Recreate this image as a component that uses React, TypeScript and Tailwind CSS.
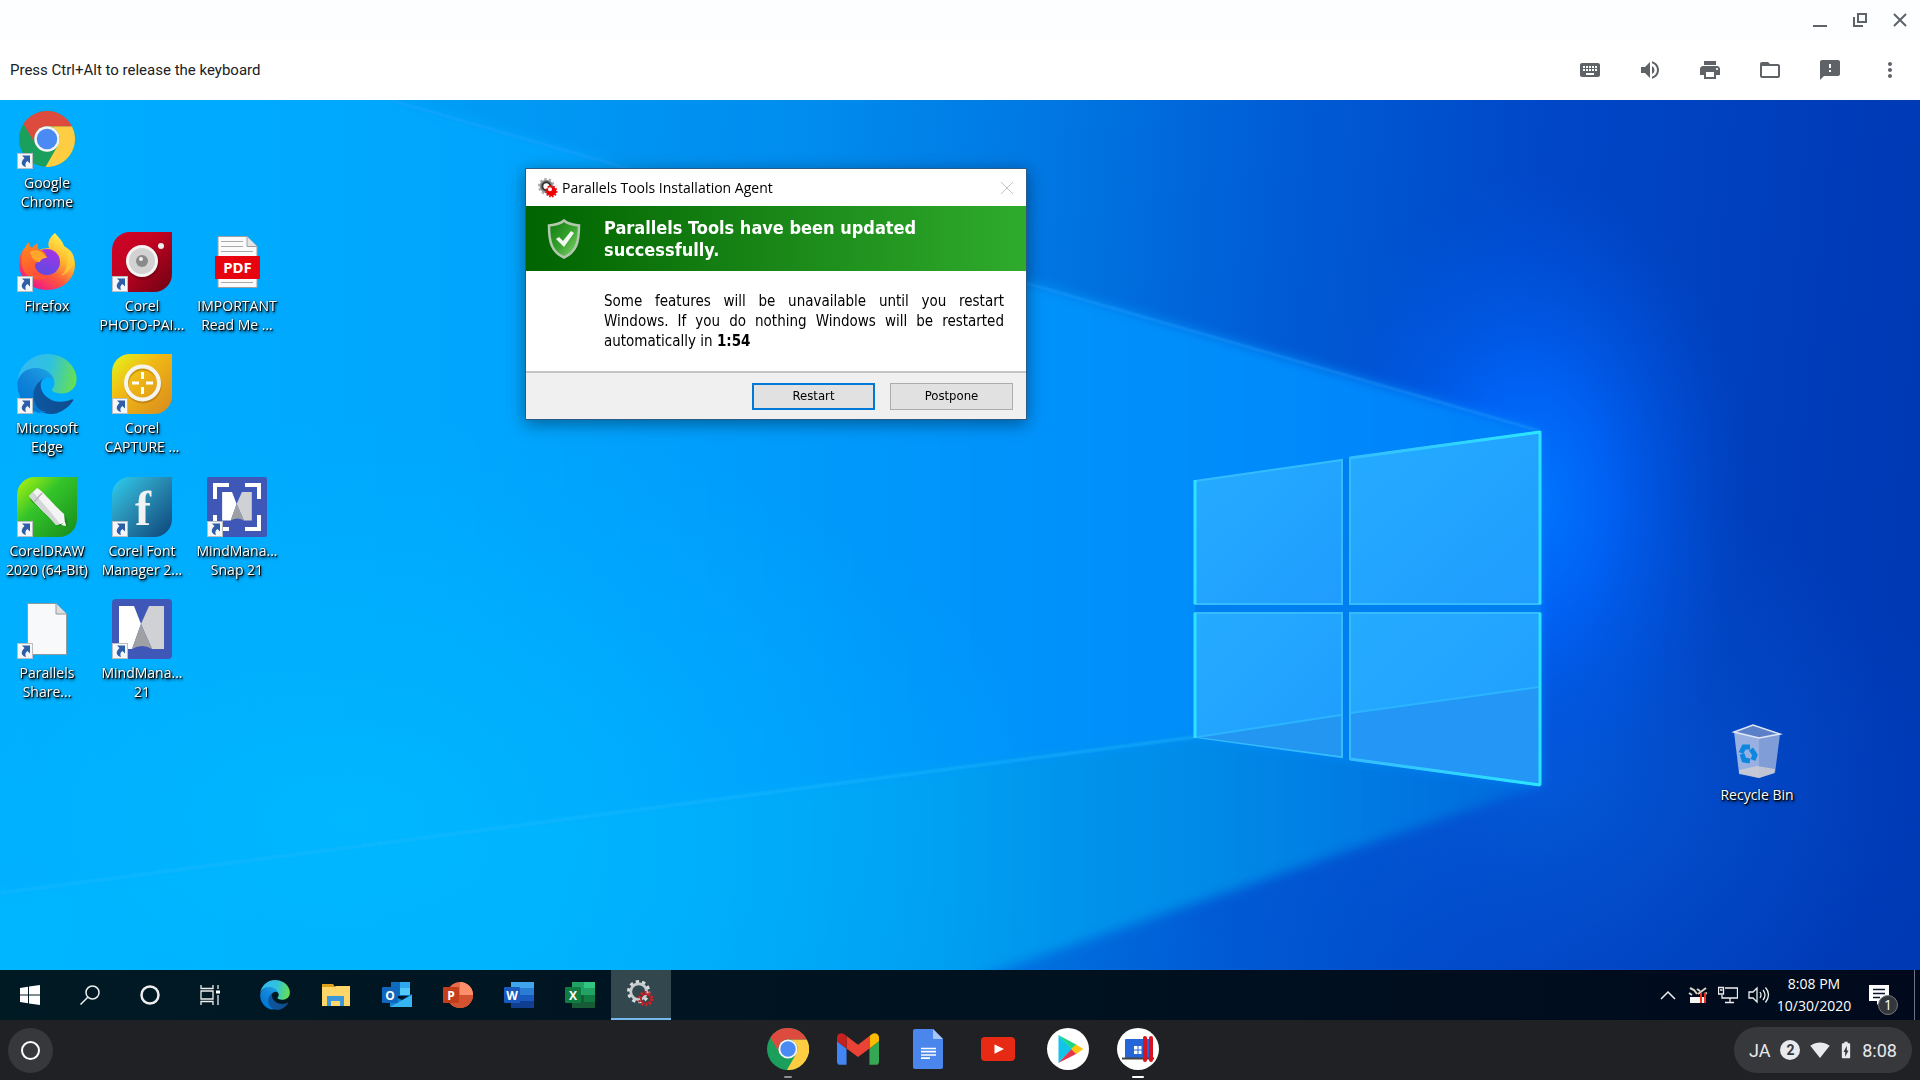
import React from "react";
import {
  MdKeyboard,
  MdVolumeUp,
  MdPrint,
  MdFolderOpen,
  MdFeedback,
  MdMoreVert,
  MdSignalWifi4Bar,
  MdBatteryChargingFull,
} from "react-icons/md";

/* ---------- logos ---------- */

type IconProps = { className?: string };

function ChromeLogo({ className }: IconProps) {
  return (
    <svg viewBox="0 0 48 48" className={className}>
      <circle cx="24" cy="24" r="24" fill="#1a9f5c" />
      <path d="M45.4 13.1A24 24 0 0 1 22.7 48L33.44 29.45A10.9 10.9 0 0 0 24 13.1Z" fill="#ffcd41" />
      <path d="M24 13.1H45.4A24 24 0 0 0 3.86 10.9L14.56 29.45A10.9 10.9 0 0 1 24 13.1Z" fill="#dc4b3e" />
      <circle cx="24" cy="24" r="10.9" fill="#f5f5f5" />
      <circle cx="24" cy="24" r="8.8" fill="#4a8af4" />
    </svg>
  );
}

function EdgeLogo({ className }: IconProps) {
  return (
    <svg viewBox="0 0 256 259" className={className}>
      <defs>
        <linearGradient id="edge-a" x1="60" y1="177" x2="241" y2="177" gradientUnits="userSpaceOnUse">
          <stop offset="0" stopColor="#0c59a4" />
          <stop offset="1" stopColor="#114a8b" />
        </linearGradient>
        <linearGradient id="edge-b" x1="150" y1="95" x2="42" y2="225" gradientUnits="userSpaceOnUse">
          <stop offset="0" stopColor="#1b9de2" />
          <stop offset="0.4" stopColor="#1486da" />
          <stop offset="1" stopColor="#0078d4" />
        </linearGradient>
        <linearGradient id="edge-c" x1="10" y1="60" x2="250" y2="120" gradientUnits="userSpaceOnUse">
          <stop offset="0" stopColor="#35b8f1" />
          <stop offset="0.5" stopColor="#2fc2df" />
          <stop offset="1" stopColor="#66e050" />
        </linearGradient>
      </defs>
      <path
        fill="url(#edge-a)"
        d="M235.68 195.46a93.73 93.73 0 0 1-10.54 4.71 101.87 101.87 0 0 1-35.9 6.46c-47.32 0-88.54-32.55-88.54-74.32A31.48 31.48 0 0 1 117.13 105c-42.8 1.8-53.8 46.4-53.8 72.53 0 73.88 68.09 81.37 82.76 81.37 7.91 0 19.84-2.3 27-4.56l1.31-.44a128.34 128.34 0 0 0 66.6-52.8 4 4 0 0 0-5.32-5.64z"
      />
      <path
        fill="url(#edge-b)"
        d="M105.73 246.39a79.2 79.2 0 0 1-22.74-21.34 80.72 80.72 0 0 1 34.14-120c3.12-1.47 8.45-4.13 15.54-4a32.35 32.35 0 0 1 25.69 13 31.88 31.88 0 0 1 6.36 18.66c0-.21 24.46-79.6-80-79.6-43.9 0-84.5 41.66-84.5 78.21a130.15 130.15 0 0 0 12.11 56 128 128 0 0 0 80.88 67.11 75.55 75.55 0 0 0 32.52-8z"
      />
      <path
        fill="url(#edge-c)"
        d="M152.33 148.86c-.81 1.05-3.3 2.5-3.3 5.66 0 2.61 1.7 5.12 4.72 7.23 14.38 10 41.49 8.68 41.56 8.68a59.56 59.56 0 0 0 30.27-8.35 61.38 61.38 0 0 0 30.43-52.88c.26-22.41-8-37.31-11.34-43.91C223.46 23.84 177.72 0 128 0A128 128 0 0 0 0 126.2c.48-36.54 36.8-66.05 80-66.05 3.5 0 23.46.34 42 10.07 16.34 8.58 24.9 18.94 30.85 29.21 6.18 10.67 7.28 24.15 7.28 29.52s-2.74 13.33-7.8 19.91z"
      />
    </svg>
  );
}

function FirefoxLogo() {
  return (
    <svg viewBox="0 0 60 60" className="size-15">
      <defs>
        <linearGradient id="ff-body" x1="50" y1="6" x2="16" y2="56" gradientUnits="userSpaceOnUse">
          <stop offset="0" stopColor="#fff44f" />
          <stop offset="0.35" stopColor="#ffb72e" />
          <stop offset="0.65" stopColor="#ff5a3c" />
          <stop offset="1" stopColor="#f0148a" />
        </linearGradient>
        <linearGradient id="ff-globe" x1="36" y1="16" x2="26" y2="44" gradientUnits="userSpaceOnUse">
          <stop offset="0" stopColor="#a832e8" />
          <stop offset="1" stopColor="#5a4be0" />
        </linearGradient>
        <linearGradient id="ff-head" x1="8" y1="12" x2="22" y2="40" gradientUnits="userSpaceOnUse">
          <stop offset="0" stopColor="#ff8a1e" />
          <stop offset="1" stopColor="#ff5236" />
        </linearGradient>
      </defs>
      <path
        fill="url(#ff-body)"
        d="M38 1c3 4 8 8 9 13 7 4 11 11 11 18 0 15-12 26-28 26S2 46 2 32c0-7 2-13 6-16l12 3c6-3 10-3 12-3-2-6 1-11 6-15z"
      />
      <circle cx="30" cy="30" r="13" fill="url(#ff-globe)" />
      <path
        fill="url(#ff-head)"
        d="M12 10c0 3 1 5 3 6 2-3 4-4 6-5-1 3 0 5 1 7 4 0 6 2 8 7-3 1-6 2-8 5-4 0-5 4-3 7 2 5 7 8 13 7-6 6-20 5-25-5C3 32 4 18 12 10z"
      />
      <path fill="#ffb42c" d="M13 20c6-4 13-1 17 6-4 0-6 1-7 4-4 0-8-2-10-10z" opacity="0.8" />
      <path fill="#ffd53a" d="M47 15c6 9 5 21-3 29 10-4 15-14 12-22-2-4-5-6-9-7z" opacity="0.6" />
    </svg>
  );
}

/* Corel tiles share one leaf-shaped outline */
function CorelTile({ id, from, mid, to, children }: { id: string; from: string; mid: string; to: string; children: React.ReactNode }) {
  return (
    <svg viewBox="0 0 60 60" className="size-15">
      <defs>
        <linearGradient id={id} x1="0" y1="0" x2="1" y2="1">
          <stop offset="0.05" stopColor={from} />
          <stop offset="0.4" stopColor={mid} />
          <stop offset="1" stopColor={to} />
        </linearGradient>
      </defs>
      <path d="M18 0H60V42a18 18 0 0 1-18 18H0V18A18 18 0 0 1 18 0Z" fill={`url(#${id})`} />
      {children}
    </svg>
  );
}

function PhotoPaintIcon() {
  return (
    <CorelTile id="corel-photo" from="#cd0425" mid="#c30322" to="#6d0212">
      <circle cx="31" cy="31" r="17" fill="#6d0010" opacity="0.5" />
      <circle cx="30" cy="29" r="16" fill="#f4f4f4" />
      <circle cx="30" cy="29" r="13" fill="#d2d2d2" />
      <circle cx="30" cy="29" r="6" fill="#8a8a8a" />
      <circle cx="29" cy="27" r="2" fill="#f0f0f0" />
      <circle cx="49" cy="14" r="3" fill="#eee" />
    </CorelTile>
  );
}

function CaptureIcon() {
  return (
    <CorelTile id="corel-capture" from="#e3f01d" mid="#f0b914" to="#d88a1e">
      <circle cx="31" cy="31" r="16.5" fill="none" stroke="#a8690e" strokeWidth="4" opacity="0.5" />
      <circle cx="30.5" cy="29" r="16.5" fill="none" stroke="#f5f5f0" strokeWidth="4" />
      <path d="M30.5 18v7M30.5 33v7M20 29h7M34 29h7" stroke="#fff" strokeWidth="3" />
    </CorelTile>
  );
}

function DrawIcon() {
  return (
    <CorelTile id="corel-draw" from="#a4ef12" mid="#35c52a" to="#178a1c">
      <path d="M13 23l8-8L50 41l1 8-10 0z" fill="#127a18" opacity="0.5" />
      <path d="M12 19l8-8c7 4 9 9 27 26l1 9-9 2C31 38 22 32 12 19z" fill="#f4f4f4" />
      <path d="M12 19l4-4c9 10 18 20 27 32l-4 1C31 38 22 32 12 19z" fill="#d4d6d8" />
      <path d="M17 25l8-9" stroke="#b6b6b6" strokeWidth="1.5" />
      <path d="M44 48l4-3 1 4z" fill="#fff" />
    </CorelTile>
  );
}

function FontManagerIcon() {
  return (
    <CorelTile id="corel-font" from="#2cc8ea" mid="#2b93b8" to="#0d4478">
      <text x="31" y="48" textAnchor="middle" fontSize="48" fontWeight="bold" fill="#f0f2f4" className="font-['Liberation_Serif',serif]">
        f
      </text>
    </CorelTile>
  );
}

function MindM() {
  return (
    <>
      <path d="M7 7H22L29 25 20 50H7Z" fill="#fff" />
      <path d="M37 7H52V50H40L29 25Z" fill="#d0d1d4" />
      <path d="M29 25L40 50Q30 44 20 50Z" fill="#9fa0a4" />
    </>
  );
}

function MindManagerIcon() {
  return (
    <svg viewBox="0 0 60 60" className="size-15">
      <rect width="60" height="60" rx="4" fill="#3f57b6" />
      <MindM />
    </svg>
  );
}

function MindSnapIcon() {
  return (
    <svg viewBox="0 0 60 60" className="size-15">
      <rect width="60" height="60" rx="2" fill="#3f57b6" />
      <path d="M8 22V8H22M38 8H52V22M52 38V52H38M22 52H8V38" fill="none" stroke="#fff" strokeWidth="4" />
      <g transform="translate(10.5 10.5) scale(.66)">
        <MindM />
      </g>
    </svg>
  );
}

function PdfIcon() {
  return (
    <svg viewBox="0 0 60 60" className="size-15">
      <path d="M11 4.5H40L50 14.5V55.5H11Z" fill="#fafafa" stroke="#9aa0a4" />
      <path d="M40 4.5V14.5H50" fill="#e4e4e4" stroke="#9aa0a4" />
      <path d="M14 9.5H36M14 14.5H36M14 19.5H46M14 50.5H46" stroke="#a9a9a9" />
      <rect x="8" y="24" width="45" height="23" fill="#e8040f" />
      <text x="30.5" y="41" textAnchor="middle" fontSize="15" fontWeight="bold" fill="#fff" className="font-['Noto_Sans',sans-serif]">
        PDF
      </text>
    </svg>
  );
}

function BlankFileIcon() {
  return (
    <svg viewBox="0 0 60 60" className="size-15">
      <path d="M10.5 4.5H39L49.5 15V55.5H10.5Z" fill="#f8f9fa" stroke="#8f9a9f" />
      <path d="M39 4.5V15H49.5" fill="#dcdfe0" stroke="#8f9a9f" />
    </svg>
  );
}

function RecycleBinIcon() {
  return (
    <svg viewBox="0 0 60 60" className="size-15">
      <path d="M7 11L32 17V57L12 52Z" fill="#b3c3e6" opacity="0.85" />
      <path d="M32 17L53 13 48 52 32 57Z" fill="#8ea6da" opacity="0.9" />
      <path d="M7 11L26 4 53 13 32 17Z" fill="#5c80c8" stroke="#dde6f5" strokeWidth="1.5" />
      <path d="M12 49L30 45 48 48 47 52 32 57 12 53Z" fill="#cfcfd2" opacity="0.8" />
      <g fill="none" stroke="#0b87e0" strokeWidth="5">
        <path d="M14 32l3-6 6 0" />
        <path d="M24 28l4 6-2 5" />
        <path d="M23 40l-6-1-2-6" />
      </g>
    </svg>
  );
}

function GearsIcon({ className, dark }: IconProps & { dark?: boolean }) {
  return (
    <svg viewBox="0 0 30 30" className={className}>
      <circle cx="12.5" cy="12.5" r="8.5" fill="none" stroke={dark ? "#8a8a8a" : "#c9cccf"} strokeWidth="3" />
      <circle cx="12.5" cy="12.5" r="11" fill="none" stroke={dark ? "#aaa" : "#d9dcde"} strokeWidth="3" strokeDasharray="3.6 3.31" />
      {dark && <circle cx="12.5" cy="12.5" r="6" fill="none" stroke="#333" strokeWidth="3" />}
      <circle cx="20" cy="20" r="5" fill={dark ? "#e00" : "none"} stroke={dark ? "#e00" : "#b51d20"} strokeWidth={dark ? 5 : 2} />
      <circle cx="20" cy="20" r={dark ? 8 : 7} fill="none" stroke={dark ? "#f01010" : "#d0242a"} strokeWidth="2.5" strokeDasharray="2.4 2" />
      {dark && <circle cx="18" cy="17" r="3" fill="#fff" />}
    </svg>
  );
}

function ShieldIcon() {
  return (
    <svg viewBox="0 0 34 40" className="h-10 w-[34px]">
      <defs>
        <linearGradient id="shield" x1="0" y1="0" x2="1" y2="1">
          <stop offset="0" stopColor="#0e7a10" />
          <stop offset="0.5" stopColor="#35a02c" />
          <stop offset="1" stopColor="#8fdc78" />
        </linearGradient>
      </defs>
      <path d="M17 1.5C21 5 27 6 32 6.5 32 24 29 33 17 38.5 5 33 2 24 2 6.5 7 6 13 5 17 1.5Z" fill="url(#shield)" stroke="#b4c8b0" strokeWidth="2.500" />
      <path d="M9 20l3-2 4 4 8-10 3 2-10 14z" fill="#f3f6f1" />
    </svg>
  );
}

/* ---------- wallpaper ---------- */

function Wallpaper() {
  return (
    <svg viewBox="0 0 1920 870" preserveAspectRatio="none" className="absolute inset-0 size-full" aria-hidden="true">
      <defs>
        <linearGradient id="wp-base" x1="0" y1="0" x2="1920" y2="180" gradientUnits="userSpaceOnUse">
          <stop offset="0" stopColor="#00a4f9" />
          <stop offset="0.22" stopColor="#009df6" />
          <stop offset="0.42" stopColor="#008cee" />
          <stop offset="0.55" stopColor="#0076e2" />
          <stop offset="0.66" stopColor="#005dd6" />
          <stop offset="0.8" stopColor="#0047c8" />
          <stop offset="1" stopColor="#0039b4" />
        </linearGradient>
        <linearGradient id="wp-beam" x1="0" y1="0" x2="1540" y2="0" gradientUnits="userSpaceOnUse">
          <stop offset="0" stopColor="#00aeff" />
          <stop offset="0.3" stopColor="#00a6fd" />
          <stop offset="0.6" stopColor="#0096fb" />
          <stop offset="0.8" stopColor="#008cfa" />
          <stop offset="1" stopColor="#0080fa" />
        </linearGradient>
        <linearGradient id="wp-low" x1="0" y1="0" x2="1540" y2="0" gradientUnits="userSpaceOnUse">
          <stop offset="0" stopColor="#00b7ff" />
          <stop offset="0.35" stopColor="#00b2fd" />
          <stop offset="0.6" stopColor="#009ff2" />
          <stop offset="0.8" stopColor="#0088e6" />
          <stop offset="1" stopColor="#0068dc" />
        </linearGradient>
        <radialGradient id="wp-cyan" cx="0" cy="0" r="1" gradientUnits="userSpaceOnUse" gradientTransform="translate(350 720) scale(700 420)">
          <stop offset="0" stopColor="#00b8ff" />
          <stop offset="1" stopColor="#00b0ff" stopOpacity="0" />
        </radialGradient>
        <radialGradient id="wp-glow" cx="0" cy="0" r="1" gradientUnits="userSpaceOnUse" gradientTransform="translate(1530 400) scale(220 330)">
          <stop offset="0" stopColor="#0078ff" />
          <stop offset="0.35" stopColor="#0068ff" stopOpacity="0.8" />
          <stop offset="1" stopColor="#0054e0" stopOpacity="0" />
        </radialGradient>
        <radialGradient id="wp-floor" cx="0" cy="0" r="1" gradientUnits="userSpaceOnUse" gradientTransform="translate(1540 680) scale(420 300)">
          <stop offset="0" stopColor="#0560dc" stopOpacity="0.7" />
          <stop offset="1" stopColor="#0550d0" stopOpacity="0" />
        </radialGradient>
        <linearGradient id="wp-pane" x1="0" y1="0" x2="1" y2="1">
          <stop offset="0" stopColor="#24acff" />
          <stop offset="1" stopColor="#209cff" />
        </linearGradient>
        <linearGradient id="wp-edge" x1="1350" y1="0" x2="1540" y2="0" gradientUnits="userSpaceOnUse">
          <stop offset="0" stopColor="#34bcff" />
          <stop offset="1" stopColor="#2ce6ff" />
        </linearGradient>
        <filter id="wp-soft" x="-5%" y="-5%" width="110%" height="110%">
          <feGaussianBlur stdDeviation="6" />
        </filter>
        <filter id="wp-line" x="-5%" y="-5%" width="110%" height="110%">
          <feGaussianBlur stdDeviation="1" />
        </filter>
      </defs>
      <rect width="1920" height="870" fill="url(#wp-base)" />
      <rect width="1920" height="870" fill="url(#wp-floor)" />
      <rect width="1920" height="870" fill="url(#wp-glow)" />
      <g filter="url(#wp-soft)">
        <path d="M-20 -20H330L1540 331V685L940 890H-20Z" fill="url(#wp-beam)" />
        <path d="M-20 796L1195 637 1540 685 940 890H-20Z" fill="url(#wp-low)" />
      </g>
      <rect width="1200" height="870" fill="url(#wp-cyan)" />
      <g filter="url(#wp-line)">
        <path d="M390 0L1540 331" stroke="#2ba4ff" strokeWidth="2" opacity="0.5" />
        <path d="M0 793L1195 637" stroke="#20baff" strokeWidth="3" opacity="0.5" />
      </g>
      <path d="M1195 381L1540 331V685L1195 637Z" fill="#007ff0" />
      <g fill="url(#wp-pane)" stroke="#34bcff" strokeWidth="2">
        <path d="M1195 381L1342 360V504H1195Z" />
        <path d="M1350 358L1540 332V504H1350Z" />
        <path d="M1195 513H1342V657L1195 637Z" />
        <path d="M1350 513H1540V685L1350 659Z" />
      </g>
      <path d="M1197 637L1341 615V656Z" fill="#2396f2" />
      <path d="M1351 613L1539 587V683L1351 658Z" fill="#2396f6" />
      <path d="M1197 637L1341 615M1351 613L1539 587" stroke="#2bb4ff" strokeWidth="2" />
      <path d="M1195 380V504M1195 513V638M1540 331V504M1540 513V685" stroke="#2ce2ff" strokeWidth="3" />
      <path d="M1350 358L1540 332M1350 659L1540 685" stroke="url(#wp-edge)" strokeWidth="3" />
    </svg>
  );
}

/* ---------- desktop ---------- */

interface Shortcut {
  label: string[];
  icon: React.ReactNode;
  cell: string;
  arrow?: boolean;
}

const SHORTCUTS: Shortcut[] = [
  { label: ["Google", "Chrome"], icon: <ChromeLogo className="size-14" />, cell: "col-start-1 row-start-1", arrow: true },
  { label: ["Firefox"], icon: <FirefoxLogo />, cell: "col-start-1 row-start-2", arrow: true },
  { label: ["Corel", "PHOTO-PAI..."], icon: <PhotoPaintIcon />, cell: "col-start-2 row-start-2", arrow: true },
  { label: ["IMPORTANT", "Read Me ..."], icon: <PdfIcon />, cell: "col-start-3 row-start-2" },
  { label: ["Microsoft", "Edge"], icon: <EdgeLogo className="size-15" />, cell: "col-start-1 row-start-3", arrow: true },
  { label: ["Corel", "CAPTURE ..."], icon: <CaptureIcon />, cell: "col-start-2 row-start-3", arrow: true },
  { label: ["CorelDRAW", "2020 (64-Bit)"], icon: <DrawIcon />, cell: "col-start-1 row-start-4", arrow: true },
  { label: ["Corel Font", "Manager 2..."], icon: <FontManagerIcon />, cell: "col-start-2 row-start-4", arrow: true },
  { label: ["MindMana...", "Snap 21"], icon: <MindSnapIcon />, cell: "col-start-3 row-start-4", arrow: true },
  { label: ["Parallels", "Share..."], icon: <BlankFileIcon />, cell: "col-start-1 row-start-5", arrow: true },
  { label: ["MindMana...", "21"], icon: <MindManagerIcon />, cell: "col-start-2 row-start-5", arrow: true },
];

function DesktopIcon({ label, icon, arrow, cell }: Shortcut) {
  return (
    <button type="button" className={`flex w-[94px] flex-col items-center self-start ${cell}`}>
      <span className="relative flex size-15 items-center justify-center">
        {icon}
        {arrow && (
          <svg viewBox="0 0 16 16" className="absolute bottom-0 left-0 size-4">
            <rect x="0.5" y="0.5" width="15" height="15" fill="#f4f6f8" stroke="#b9bec4" />
            <path d="M5 2.5h8v8l-2.5-2.5C8 9.5 8 11.5 9 14 4.5 13 3 9 7.5 5z" fill="#2d5fa8" />
          </svg>
        )}
      </span>
      <span className="mt-1 flex flex-col whitespace-nowrap text-[14px] leading-[19px] text-white [text-shadow:1px_1px_1px_#000,1px_2px_3px_#000,0_0_2px_#0008]">
        {label.map((line) => (
          <span key={line}>{line}</span>
        ))}
      </span>
    </button>
  );
}

function InstallDialog() {
  return (
    <section
      role="dialog"
      aria-labelledby="agent-title"
      className="absolute left-[525px] top-[68px] w-[502px] border border-[#2a5a86] bg-white shadow-[0_4px_16px_rgba(0,0,0,0.4)]"
    >
      <header className="flex h-[37px] items-center px-3">
        <GearsIcon className="size-5" dark />
        <h1 id="agent-title" className="ml-1 flex-1 text-[14px] leading-5 text-black">
          Parallels Tools Installation Agent
        </h1>
        <button type="button" aria-label="Close" disabled>
          <svg viewBox="0 0 14 14" className="size-[14px]" stroke="#c4c4c4">
            <path d="M1 1l12 12M13 1L1 13" />
          </svg>
        </button>
      </header>
      <div className="flex h-[65px] items-center bg-linear-to-r from-[#006400] to-[#2fab2c] pl-[21px] font-['DejaVu_Sans_Condensed','DejaVu_Sans',sans-serif]">
        <ShieldIcon />
        <p className="ml-[23px] w-[360px] text-[18px] font-bold leading-[22px] text-white">Parallels Tools have been updated successfully.</p>
      </div>
      <div className="h-[100px] pl-[78px] pr-[22px] pt-5 font-['DejaVu_Sans_Condensed','DejaVu_Sans',sans-serif] text-[15px] leading-5 text-black">
        <p className="text-justify [text-align-last:justify]">
          Some features will be unavailable until you restart Windows. If you do nothing Windows will be restarted
        </p>
        <p>
          automatically in <b>1:54</b>
        </p>
      </div>
      <footer className="flex h-[48px] items-center justify-end gap-[15px] border-t-2 border-[#c4c4c4] bg-[#f0f0f0] pr-[13px] font-['DejaVu_Sans_Condensed','DejaVu_Sans',sans-serif] text-[13px] text-black">
        <button type="button" className="h-[27px] w-[123px] border-2 border-[#0078d7] bg-[#e1e1e1]">
          Restart
        </button>
        <button type="button" className="h-[27px] w-[123px] border border-[#adadad] bg-[#e1e1e1]">
          Postpone
        </button>
      </footer>
    </section>
  );
}

/* ---------- windows taskbar ---------- */

function OfficeBadge({ letter, color }: { letter: string; color: string }) {
  return (
    <>
      <rect y="7" width="16" height="16" rx="1" fill={color} />
      <text x="8" y="19.5" textAnchor="middle" fontSize="12" fontWeight="bold" fill="#fff">
        {letter}
      </text>
    </>
  );
}

const APPS: { name: string; icon: React.ReactNode }[] = [
  { name: "Microsoft Edge", icon: <EdgeLogo className="size-[30px]" /> },
  {
    name: "File Explorer",
    icon: (
      <svg viewBox="0 0 30 30" className="size-[30px]">
        <path d="M1 4h11l2 3h14v4H1z" fill="#e0a11b" />
        <path d="M1 7h12l2-1h14v20H1z" fill="#ffd668" />
        <path d="M6 16h17v10h-4v-5h-9v5H6z" fill="#3b96dc" />
      </svg>
    ),
  },
  {
    name: "Outlook",
    icon: (
      <svg viewBox="0 0 30 30" className="size-[30px]">
        <path d="M9 2h19v14H9z" fill="#0f6cbd" />
        <path d="M18 2h10v6H18z" fill="#30a8ee" />
        <path d="M18 8h10v7H18z" fill="#50c8f8" />
        <path d="M8 14l12 6 10-6v13H8z" fill="#1684d8" />
        <path d="M8 27l22-12v12z" fill="#35b5f2" />
        <OfficeBadge letter="O" color="#0f68be" />
      </svg>
    ),
  },
  {
    name: "PowerPoint",
    icon: (
      <svg viewBox="0 0 30 30" className="size-[30px]">
        <circle cx="17" cy="15" r="13" fill="#ed6c47" />
        <path d="M17 2A13 13 0 0 1 30 15H17z" fill="#ff8f6b" />
        <path d="M4 15h26a13 13 0 0 1-26 0z" fill="#d35230" />
        <OfficeBadge letter="P" color="#c43e1c" />
      </svg>
    ),
  },
  {
    name: "Word",
    icon: (
      <svg viewBox="0 0 30 30" className="size-[30px]">
        <path d="M7 2h23v7H7z" fill="#41a5ee" />
        <path d="M7 8h23v7H7z" fill="#2b7cd3" />
        <path d="M7 15h23v7H7z" fill="#185abd" />
        <path d="M7 21h23v7H7z" fill="#103f91" />
        <OfficeBadge letter="W" color="#185abd" />
      </svg>
    ),
  },
  {
    name: "Excel",
    icon: (
      <svg viewBox="0 0 30 30" className="size-[30px]">
        <path d="M7 2h12v13H7z" fill="#21a366" />
        <path d="M19 2h11v7H19z" fill="#33c481" />
        <path d="M19 8h11v7H19z" fill="#21a366" />
        <path d="M7 15h23v13H7z" fill="#185c37" />
        <path d="M19 15h11v7H19z" fill="#107c41" />
        <OfficeBadge letter="X" color="#107c41" />
      </svg>
    ),
  },
];

function WindowsTaskbar() {
  return (
    <nav aria-label="Windows taskbar" className="flex h-[50px] items-stretch bg-linear-to-r from-[#001a24] to-[#000a1c] text-white">
      <button type="button" aria-label="Start" className="flex w-15 items-center justify-center">
        <svg viewBox="0 0 20 20" className="size-5" fill="#fff">
          <path d="M0 3l8-1.2V9.5H0zM9 1.6L20 0v9.5H9zM0 10.5h8v7.7L0 17zM9 10.5h11V20L9 18.4z" />
        </svg>
      </button>
      <button type="button" aria-label="Search" className="flex w-15 items-center justify-center">
        <svg viewBox="0 0 20 20" className="size-5" fill="none" stroke="#eee" strokeWidth="1.5">
          <circle cx="12.5" cy="7.5" r="6.5" />
          <path d="M8 12L0.5 19.5" />
        </svg>
      </button>
      <button type="button" aria-label="Cortana" className="flex w-15 items-center justify-center">
        <svg viewBox="0 0 20 20" className="size-5" fill="none" stroke="#eee" strokeWidth="2.5">
          <circle cx="10" cy="10" r="8.5" />
        </svg>
      </button>
      <button type="button" aria-label="Task View" className="flex w-15 items-center justify-center">
        <svg viewBox="0 0 20 20" className="size-5" fill="none" stroke="#eee" strokeWidth="1.3">
          <path d="M1 0v3.5h12V0M1 20v-3.5h12V20M1 6h12v8H1zM18 0v4M18 10v10" />
          <path d="M16 5.5h4v3h-4z" fill="#fff" stroke="none" />
        </svg>
      </button>
      <div className="ml-[5px] flex gap-px">
        {APPS.map((app) => (
          <button key={app.name} type="button" aria-label={app.name} className="flex w-15 items-center justify-center">
            {app.icon}
          </button>
        ))}
        <button type="button" aria-label="Parallels Tools" className="flex w-15 items-center justify-center border-b-2 border-[#76b9ed] bg-[#33474f]">
          <GearsIcon className="size-7" />
        </button>
      </div>

      <div className="ml-auto flex items-center">
        <button type="button" aria-label="Show hidden icons">
          <svg viewBox="0 0 16 10" className="h-[10px] w-4" fill="none" stroke="#eee" strokeWidth="1.5">
            <path d="M1 9l7-7 7 7" />
          </svg>
        </button>
        <svg viewBox="0 0 20 18" className="ml-3 h-[18px] w-5">
          <path d="M2 2l4 2 3 4M1 7l3 2M18 2l-4 3-4 3M9 3l3 2M19 7l-3 1" stroke="#d8d4c8" strokeWidth="2" fill="none" />
          <path d="M2 11h16v6H2z" fill="#f5f5f5" />
          <path d="M13 7v10M17 7v10" stroke="#f0301c" strokeWidth="2" />
        </svg>
        <svg viewBox="0 0 20 18" className="ml-[10px] h-[18px] w-5" fill="none" stroke="#eee" strokeWidth="1.3">
          <path d="M7 2h12.5v10H4V9M12 12v4M7 16.5h9" />
          <path d="M0.5 1.5h5V8h-5zM2 4h2.5" />
        </svg>
        <svg viewBox="0 0 22 18" className="ml-[10px] h-[18px] w-[22px]" fill="none" stroke="#eee" strokeWidth="1.3">
          <path d="M1 6h4l4-4v14l-4-4H1zM12 6q2 3 0 6M15 4q4 5 0 10M17.5 1.5q6 7 0 15" />
        </svg>
        <button type="button" className="ml-[7px] flex w-[74px] flex-col items-center text-[14px] leading-[22px]">
          <span>8:08 PM</span>
          <span>10/30/2020</span>
        </button>
        <button type="button" aria-label="1 notification" className="relative ml-[18px] mt-[10px] h-[30px] w-[29px]">
          <svg viewBox="0 0 29 30" className="size-full">
            <path d="M0 0h20v16h-8l-4 4v-4H0z" fill="#fff" />
            <path d="M4 4.5h12M4 8.5h12M4 12.5h7" stroke="#0a1428" strokeWidth="1.3" />
          </svg>
          <span className="absolute bottom-0 right-0 flex size-5 items-center justify-center rounded-full border border-[#777] bg-[#33363c] text-[14px] leading-5">
            1
          </span>
        </button>
        <div className="ml-4 mr-[5px] w-px self-stretch bg-[#6c7684]" />
      </div>
    </nav>
  );
}

/* ---------- chrome os shelf ---------- */

const SHELF: { name: string; icon: React.ReactNode; running?: string }[] = [
  { name: "Chrome", icon: <ChromeLogo className="size-[42px]" />, running: "w-2 bg-[#8d8f92]" },
  {
    name: "Gmail",
    icon: (
      <svg viewBox="52 42 88 66" className="h-8 w-[42px]">
        <path fill="#4285f4" d="M58 108h14V74L52 59v43c0 3.32 2.69 6 6 6" />
        <path fill="#34a853" d="M120 108h14c3.32 0 6-2.69 6-6V59l-20 15" />
        <path fill="#fbbc04" d="M120 48v26l20-15v-8c0-7.42-8.47-11.65-14.4-7.2" />
        <path fill="#ea4335" d="M72 74V48l24 18 24-18v26L96 92" />
        <path fill="#c5221f" d="M52 51v8l20 15V48l-5.6-4.2c-5.94-4.45-14.4-.22-14.4 7.2" />
      </svg>
    ),
  },
  {
    name: "Docs",
    icon: (
      <svg viewBox="0 0 30 40" className="h-10 w-[30px]">
        <path d="M2 0H20L30 10V38a2 2 0 0 1-2 2H2a2 2 0 0 1-2-2V2A2 2 0 0 1 2 0Z" fill="#4a86ec" />
        <path d="M20 0L30 10H21a1 1 0 0 1-1-1Z" fill="#a8c6fa" />
        <path d="M8 19.5H23M8 22.7H23M8 26H23M8 29.2H17" stroke="#fff" strokeWidth="1.7" />
      </svg>
    ),
  },
  {
    name: "YouTube",
    icon: (
      <svg viewBox="0 0 34 24" className="h-6 w-[34px]">
        <rect width="34" height="24" rx="4" fill="#e62a13" />
        <path d="M13.5 7.5L23 12l-9.5 4.8z" fill="#fff" />
      </svg>
    ),
  },
  {
    name: "Play Store",
    icon: (
      <svg viewBox="0 0 42 42" className="size-[42px]">
        <circle cx="21" cy="21" r="21" fill="#fff" />
        <path d="M11.5 7V35L25 21z" fill="#12c4ea" />
        <path d="M11.5 7L30 17l-5 4.500z" fill="#1bd787" />
        <path d="M11.5 35L30 25.5l-5-5z" fill="#e6344c" />
        <path d="M29 16.5l7.5 4.5L29 26l-5-5z" fill="#fbc515" />
      </svg>
    ),
  },
  {
    name: "Parallels Desktop",
    icon: (
      <svg viewBox="0 0 42 42" className="size-[42px]">
        <circle cx="21" cy="21" r="21" fill="#fff" />
        <rect x="8" y="11" width="26" height="19" rx="1" fill="#2465d8" />
        <path d="M17 18h3.5v3.5H17zM21.5 18h3v3.5h-3zM17 22.5h3.5V26H17zM21.5 22.5h3V26h-3z" fill="#fff" />
        <path d="M5 30.5h32" stroke="#444" strokeWidth="2" />
        <path d="M28 10V32M34 10V32" stroke="#d8121e" strokeWidth="4" strokeLinecap="round" />
      </svg>
    ),
    running: "w-3 bg-white",
  },
];

function Shelf() {
  return (
    <footer className="grid h-15 grid-cols-[1fr_auto_1fr] items-center bg-[#202124] font-[Roboto,sans-serif]">
      <button type="button" aria-label="Launcher" className="ml-2 flex size-[45px] items-center justify-center rounded-full bg-[#37383b]">
        <span className="size-[19px] rounded-full border-2 border-white" />
      </button>
      <div className="flex h-full gap-[10px] pl-[6px]">
        {SHELF.map((app) => (
          <button key={app.name} type="button" aria-label={app.name} className="relative flex h-[58px] w-15 items-center justify-center">
            {app.icon}
            {app.running && <span className={`absolute bottom-0 h-[2px] rounded-full ${app.running}`} />}
          </button>
        ))}
      </div>
      <button
        type="button"
        className="mr-2 flex h-[46px] w-[178px] items-center justify-between justify-self-end rounded-full bg-[#37383b] px-[15px] text-[18px] text-[#e8eaed]"
      >
        <span>JA</span>
        <span className="flex size-5 items-center justify-center rounded-full bg-[#e8eaed] text-[14px] font-bold text-[#37383b]">2</span>
        <MdSignalWifi4Bar size={20} />
        <MdBatteryChargingFull size={20} className="-mx-1" />
        <span>8:08</span>
      </button>
    </footer>
  );
}

const TOOLS = [
  { label: "Keyboard", icon: MdKeyboard },
  { label: "Volume", icon: MdVolumeUp },
  { label: "Print", icon: MdPrint },
  { label: "Files", icon: MdFolderOpen },
  { label: "Feedback", icon: MdFeedback },
  { label: "More", icon: MdMoreVert },
];

export default function App() {
  return (
    <div className="flex min-h-screen flex-col overflow-hidden font-['Open_Sans','Noto_Sans',sans-serif]">
      {/* Window caption */}
      <div className="flex h-10 items-center justify-end gap-5 bg-[#fdfeff] pr-[10px]">
        <button type="button" aria-label="Minimize">
          <svg viewBox="0 0 20 20" className="size-5" stroke="#5f6368" strokeWidth="2">
            <path d="M3 16h14" />
          </svg>
        </button>
        <button type="button" aria-label="Restore">
          <svg viewBox="0 0 20 20" className="size-5" fill="none" stroke="#5f6368" strokeWidth="2">
            <path d="M8 4h8v8H8zM4 7v9h9" />
          </svg>
        </button>
        <button type="button" aria-label="Close">
          <svg viewBox="0 0 20 20" className="size-5" stroke="#5f6368" strokeWidth="2">
            <path d="M4 4l12 12M16 4L4 16" />
          </svg>
        </button>
      </div>

      {/* Parallels toolbar */}
      <header className="flex h-15 items-center justify-between bg-white pl-[10px] pr-[18px]">
        <p className="pt-px font-[Roboto,sans-serif] text-[15px] text-[#202124]">Press Ctrl+Alt to release the keyboard</p>
        <div className="flex gap-9">
          {TOOLS.map((tool) => (
            <button key={tool.label} type="button" aria-label={tool.label} className="text-[#5f6368]">
              <tool.icon size={24} />
            </button>
          ))}
        </div>
      </header>

      <main className="relative flex-1">
        <Wallpaper />
        <div className="relative grid h-[622px] w-max grid-cols-3 grid-rows-5 gap-x-px pt-[9px]">
          {SHORTCUTS.map((s) => (
            <DesktopIcon key={s.label.join(" ")} {...s} />
          ))}
        </div>
        <div className="absolute left-[1710px] top-[621px]">
          <DesktopIcon label={["Recycle Bin"]} icon={<RecycleBinIcon />} cell="" />
        </div>
        <InstallDialog />
      </main>

      <WindowsTaskbar />
      <Shelf />
    </div>
  );
}
